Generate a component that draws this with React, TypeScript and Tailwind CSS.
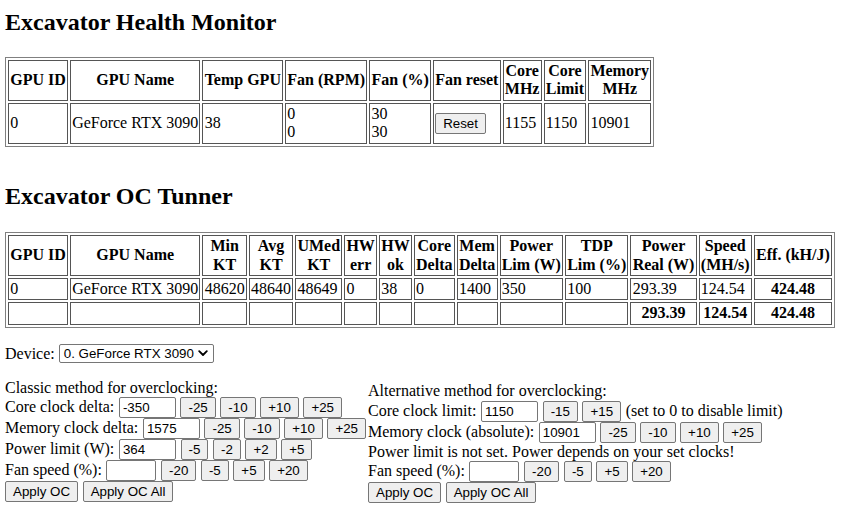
import React from "react";

const th = "border border-[#555] py-[1px] px-[1.2px] font-bold text-center align-middle";
const td = "border border-[#555] py-[1px] px-[1.2px] text-left align-middle";
const tableCls = "border-separate border-spacing-[2px] border border-[#808080]";

function Btn({ children }: { children: React.ReactNode }) {
  return (
    <button className="h-[21px] px-[7px] border border-[#767676] rounded-[2px] bg-[#efefef] text-[13.333px] leading-none font-['Liberation_Sans',Arial,sans-serif] text-black whitespace-nowrap">
      {children}
    </button>
  );
}

function Inp({ value, w = 57 }: { value?: string; w?: number }) {
  return (
    <input
      readOnly
      value={value ?? ""}
      className={
        (w === 57 ? "w-[57px]" : "w-[50px]") +
        " h-[21px] border border-[#767676] rounded-[2px] px-[3px] bg-white text-[13.333px] font-['Liberation_Sans',Arial,sans-serif] text-black"
      }
    />
  );
}

function Row({ children }: { children: React.ReactNode }) {
  return <div className="flex items-baseline gap-[4.6px] h-[21px] whitespace-nowrap">{children}</div>;
}

export default function App() {
  return (
    <div className="min-h-[520px] bg-white text-black font-['Liberation_Serif','Times_New_Roman',serif] text-[16px] leading-[1.15] pl-[5px] pt-[9px]">
      <h2 className="text-[24px] font-bold leading-[1.15]">Excavator Health Monitor</h2>
      <table className={tableCls + " mt-[20.5px]"}>
        <tbody>
          <tr>
            <th className={th}>GPU ID</th>
            <th className={th}>GPU Name</th>
            <th className={th}>Temp GPU</th>
            <th className={th}>Fan (RPM)</th>
            <th className={th}>Fan (%)</th>
            <th className={th}>Fan reset</th>
            <th className={th}>Core<br />MHz</th>
            <th className={th}>Core<br />Limit</th>
            <th className={th}>Memory<br />MHz</th>
          </tr>
          <tr>
            <td className={td}>0</td>
            <td className={td}>GeForce RTX 3090</td>
            <td className={td}>38</td>
            <td className={td}>0<br />0</td>
            <td className={td}>30<br />30</td>
            <td className={td + " text-center"}><Btn>Reset</Btn></td>
            <td className={td}>1155</td>
            <td className={td}>1150</td>
            <td className={td}>10901</td>
          </tr>
        </tbody>
      </table>

      <h2 className="text-[24px] font-bold leading-[1.15] mt-[36px]">Excavator OC Tunner</h2>
      <table className={tableCls + " mt-[22px]"}>
        <tbody>
          <tr>
            <th className={th}>GPU ID</th>
            <th className={th}>GPU Name</th>
            <th className={th}>Min<br />KT</th>
            <th className={th}>Avg<br />KT</th>
            <th className={th}>UMed<br />KT</th>
            <th className={th}>HW<br />err</th>
            <th className={th}>HW<br />ok</th>
            <th className={th}>Core<br />Delta</th>
            <th className={th}>Mem<br />Delta</th>
            <th className={th}>Power<br />Lim (W)</th>
            <th className={th}>TDP<br />Lim (%)</th>
            <th className={th}>Power<br />Real (W)</th>
            <th className={th}>Speed<br />(MH/s)</th>
            <th className={th}>Eff. (kH/J)</th>
          </tr>
          <tr>
            <td className={td}>0</td>
            <td className={td}>GeForce RTX 3090</td>
            <td className={td}>48620</td>
            <td className={td}>48640</td>
            <td className={td}>48649</td>
            <td className={td}>0</td>
            <td className={td}>38</td>
            <td className={td}>0</td>
            <td className={td}>1400</td>
            <td className={td}>350</td>
            <td className={td}>100</td>
            <td className={td}>293.39</td>
            <td className={td}>124.54</td>
            <th className={th}>424.48</th>
          </tr>
          <tr>
            <td className={td}>&nbsp;</td>
            <td className={td}></td>
            <td className={td}></td>
            <td className={td}></td>
            <td className={td}></td>
            <td className={td}></td>
            <td className={td}></td>
            <td className={td}></td>
            <td className={td}></td>
            <td className={td}></td>
            <td className={td}></td>
            <th className={th}>293.39</th>
            <th className={th}>124.54</th>
            <th className={th}>424.48</th>
          </tr>
        </tbody>
      </table>

      <div className="flex items-center gap-[4px] mt-[16px] h-[20px]">
        <span>Device:</span>
        <div className="w-[155px] h-[19px] border border-[#767676] rounded-[2px] bg-white flex items-center justify-between pl-[4px] pr-[5px] text-[13.333px] font-['Liberation_Sans',Arial,sans-serif]">
          <span>0. GeForce RTX 3090</span>
          <svg width="10" height="7" viewBox="0 0 10 7" fill="none">
            <path d="M1.2 1.2 L5 5 L8.8 1.2" stroke="#000" strokeWidth="1.8" strokeLinecap="round" strokeLinejoin="round" />
          </svg>
        </div>
      </div>

      <div className="flex items-start gap-[2px] mt-[15px]">
        <div className="flex flex-col">
          <div className="h-[18.4px] whitespace-nowrap">Classic method for overclocking:</div>
          <Row>
            <span>Core clock delta:</span>
            <Inp value="-350" />
            <Btn>-25</Btn>
            <Btn>-10</Btn>
            <Btn>+10</Btn>
            <Btn>+25</Btn>
          </Row>
          <Row>
            <span>Memory clock delta:</span>
            <Inp value="1575" />
            <Btn>-25</Btn>
            <Btn>-10</Btn>
            <Btn>+10</Btn>
            <Btn>+25</Btn>
          </Row>
          <Row>
            <span>Power limit (W):</span>
            <Inp value="364" />
            <Btn>-5</Btn>
            <Btn>-2</Btn>
            <Btn>+2</Btn>
            <Btn>+5</Btn>
          </Row>
          <Row>
            <span>Fan speed (%):</span>
            <Inp w={50} />
            <Btn>-20</Btn>
            <Btn>-5</Btn>
            <Btn>+5</Btn>
            <Btn>+20</Btn>
          </Row>
          <Row>
            <Btn>Apply OC</Btn>
            <Btn>Apply OC All</Btn>
          </Row>
        </div>
        <div className="flex flex-col pt-[3.4px]">
          <div className="h-[18.4px] whitespace-nowrap">Alternative method for overclocking:</div>
          <Row>
            <span>Core clock limit:</span>
            <Inp value="1150" />
            <Btn>-15</Btn>
            <Btn>+15</Btn>
            <span>(set to 0 to disable limit)</span>
          </Row>
          <Row>
            <span>Memory clock (absolute):</span>
            <Inp value="10901" />
            <Btn>-25</Btn>
            <Btn>-10</Btn>
            <Btn>+10</Btn>
            <Btn>+25</Btn>
          </Row>
          <div className="h-[18.4px] whitespace-nowrap">Power limit is not set. Power depends on your set clocks!</div>
          <Row>
            <span>Fan speed (%):</span>
            <Inp w={50} />
            <Btn>-20</Btn>
            <Btn>-5</Btn>
            <Btn>+5</Btn>
            <Btn>+20</Btn>
          </Row>
          <Row>
            <Btn>Apply OC</Btn>
            <Btn>Apply OC All</Btn>
          </Row>
        </div>
      </div>
    </div>
  );
}
